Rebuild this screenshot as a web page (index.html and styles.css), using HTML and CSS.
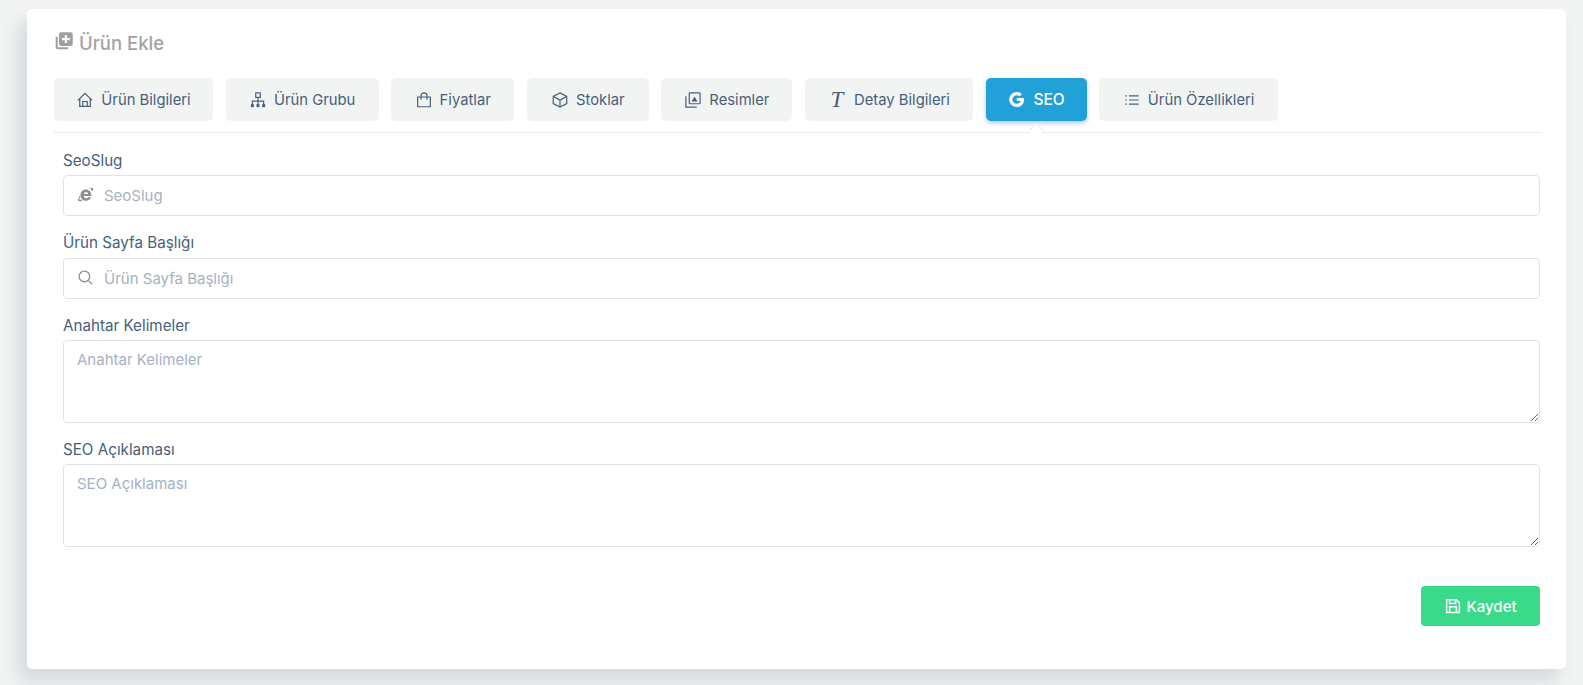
FILE: index.html
```html
<!DOCTYPE html>
<html lang="tr">
<head>
<meta charset="utf-8">
<title>Ürün Ekle</title>
<link rel="stylesheet" href="styles.css">
</head>
<body>
<main class="card">
  <h1 class="title">
    <svg class="title-icon" viewBox="0 0 24 24"><path d="M2 7h2.500v12.500H17V22H4.500A2.500 2.500 0 0 1 2 19.500z"/><path fill-rule="evenodd" d="M8.500 1.500H20A2.500 2.500 0 0 1 22.500 4v11.500A2.500 2.500 0 0 1 20 18H8.500A2.500 2.500 0 0 1 6 15.500V4a2.500 2.500 0 0 1 2.500-2.500zM13 5v3.500H9.500v2.500H13v3.500h2.500V11H19V8.500h-3.500V5z"/></svg>
    <span>Ürün Ekle</span>
  </h1>
  <nav class="tabs">
    <a class="tab tab-1"><svg class="ico" viewBox="0 0 24 24"><path d="M2.500 12.500L12 3l9.500 9.500"/><path d="M5 10v10.500h14V10"/><path d="M9 20.500V14h6v6.500"/></svg>Ürün Bilgileri</a>
    <a class="tab tab-2"><svg class="ico" viewBox="0 0 24 24"><rect x="9" y="2.500" width="6" height="6"/><path d="M12 8.500V18M4.500 18v-4.500h15V18"/><rect class="solid" x="2.500" y="17.500" width="4" height="4"/><rect class="solid" x="10" y="17.500" width="4" height="4"/><rect class="solid" x="17.500" y="17.500" width="4" height="4"/></svg>Ürün Grubu</a>
    <a class="tab tab-3"><svg class="ico" viewBox="0 0 24 24"><path d="M3.500 8h17v13h-17z"/><path d="M8 11.500V6.500a4 4 0 0 1 8 0v5"/></svg>Fiyatlar</a>
    <a class="tab tab-4"><svg class="ico" viewBox="0 0 24 24"><path d="M12 2.500l9 4.700v9.600l-9 4.700-9-4.700V7.200z"/><path d="M3 7.200l9 4.800 9-4.800M12 12v9.500"/></svg>Stoklar</a>
    <a class="tab tab-5"><svg class="ico" viewBox="0 0 24 24"><rect x="7" y="2.500" width="14.500" height="14.500" rx="1"/><path d="M2.500 7v14.500H17"/><path class="solid" d="M10 14l4-6.500 4 6.500z"/></svg>Resimler</a>
    <a class="tab tab-6"><span class="glyph-t">T</span>Detay Bilgileri</a>
    <a class="tab tab-7 active"><svg class="ico ico-g" viewBox="0 0 24 24"><path d="M21.300 10h-9v4h5.200c-.7 2.100-2.700 3.500-5.200 3.500a5.500 5.500 0 1 1 0-11c1.400 0 2.700.5 3.700 1.300l2.900-2.900A9.500 9.500 0 0 0 12.300 2.500a9.500 9.500 0 1 0 0 19c5.300 0 9.200-3.700 9.200-9.300 0-.8-.1-1.500-.2-2.200z"/></svg>SEO</a>
    <a class="tab tab-8"><svg class="ico" viewBox="0 0 24 24"><path d="M8 6.500h13M8 12h13M8 17.500h13"/><path d="M3 6.500h2M3 12h2M3 17.500h2"/></svg>Ürün Özellikleri</a>
  </nav>
  <form class="form">
    <div class="group">
      <label class="label" for="slug">SeoSlug</label>
      <div class="field">
        <svg class="field-icon ie" viewBox="0 0 24 24"><path d="M12.500 5c4.600 0 7.700 3.300 7.700 7.800v1.400H9.600c.2 2 1.500 3.200 3.300 3.200 1.300 0 2.300-.6 2.800-1.600h4.200c-.9 3-3.600 4.900-7.100 4.900-4.600 0-7.800-3.200-7.800-7.800S7.900 5 12.500 5zm-2.900 6.300h6.200c-.2-1.700-1.400-2.900-3-2.900s-2.900 1.200-3.200 2.900z"/><path d="M16.800 3.500c2.700-1.300 5-1.500 5.800-.4.700.9.300 2.600-.9 4.700-.6-1.100-1.300-2-2.100-2.700.4-.7.500-1.200.3-1.400-.4-.4-1.300-.2-2.500.3zM4.800 12.200C2.400 15.600 1 18.800 1.700 20.400c.6 1.400 2.800 1.600 6 .5-1.100-.5-2-1.100-2.700-1.900-1 .2-1.600.2-1.700-.2-.2-.7.400-2.200 1.500-4.200z"/></svg>
        <input class="input" id="slug" type="text" placeholder="SeoSlug">
      </div>
    </div>
    <div class="group">
      <label class="label" for="baslik">Ürün Sayfa Başlığı</label>
      <div class="field">
        <svg class="field-icon search" viewBox="0 0 24 24"><circle cx="10.500" cy="10.500" r="7.500"/><path d="M16 16l5.500 5.500"/></svg>
        <input class="input" id="baslik" type="text" placeholder="Ürün Sayfa Başlığı">
      </div>
    </div>
    <div class="group">
      <label class="label" for="kelime">Anahtar Kelimeler</label>
      <textarea class="area" id="kelime" placeholder="Anahtar Kelimeler"></textarea>
    </div>
    <div class="group">
      <label class="label" for="aciklama">SEO Açıklaması</label>
      <textarea class="area" id="aciklama" placeholder="SEO Açıklaması"></textarea>
    </div>
    <div class="actions">
      <button class="save" type="button"><svg class="save-icon" viewBox="0 0 24 24"><path d="M3.500 3.500h13l4 4v13h-17z"/><path d="M7.500 3.500v5h8v-5M7.500 20.500v-7.500h9v7.500"/></svg>Kaydet</button>
    </div>
  </form>
</main>
</body>
</html>
```

FILE: styles.css
```css
* { box-sizing: border-box; }
html, body { margin: 0; height: 100%; }
body {
  background: #f2f4f4;
  padding: 9px 17px 16px 27px;
  font-family: "Inter", "Noto Sans", sans-serif;
  color: #475f7b;
  overflow: hidden;
}
.card {
  height: 660px;
  background: #fff;
  border-radius: 5px;
  padding: 22px 26px 0 27px;
  box-shadow: -8px 12px 18px 0 rgba(25, 42, 70, .13);
}
.title {
  display: flex;
  align-items: center;
  gap: 5px;
  height: 24px;
  margin: 0 0 23px;
  font-size: 18.500px;
  font-weight: 500;
  color: #a3a3a3;
}
.title-icon { width: 20px; height: 20px; fill: #a0a0a0; margin-top: -4px; }
.tabs {
  display: flex;
  gap: 12.600px;
  padding-bottom: 11px;
  border-bottom: 1px solid #e9ebec;
}
.tab {
  position: relative;
  display: flex;
  align-items: center;
  justify-content: center;
  gap: 7px;
  height: 43px;
  background: #f2f4f4;
  border-radius: 5px;
  font-size: 14.800px;
  color: #475f7b;
}
.tab-1 { width: 159px; }
.tab-2 { width: 153px; }
.tab-3 { width: 123px; }
.tab-4 { width: 122px; }
.tab-5 { width: 131px; }
.tab-6 { width: 168px; }
.tab-7 { width: 101px; }
.tab-8 { width: 179px; }
.ico {
  width: 18px;
  height: 18px;
  flex: none;
  fill: none;
  stroke: #475f7b;
  stroke-width: 1.600;
}
.ico .solid { fill: #475f7b; stroke: none; }
.glyph-t {
  width: 18px;
  margin-right: 1px;
  text-align: center;
  font-family: "Liberation Serif", serif;
  font-style: italic;
  font-size: 23px;
  line-height: 1;
}
.active {
  background: #22a0d8;
  color: #fff;
  font-weight: 500;
  font-size: 15.500px;
  box-shadow: 0 2px 4px 0 rgba(90, 141, 238, .5);
}
.active::after {
  content: "";
  position: absolute;
  left: 50%;
  top: 47px;
  width: 10px;
  height: 10px;
  margin-left: -5px;
  background: #fff;
  border-top: 1px solid #e9ebec;
  border-left: 1px solid #e9ebec;
  transform: rotate(45deg);
}
.ico-g { fill: #fff; stroke: none; width: 19px; height: 19px; }
.form { padding: 15.500px 0 0 9px; }
.group { margin-bottom: 15px; }
.label {
  display: block;
  height: 21.500px;
  margin-bottom: 5px;
  font-size: 15.200px;
  line-height: 23.500px;
  color: #475f7b;
}
.field { position: relative; }
.field-icon {
  position: absolute;
  left: 14px;
  top: 11px;
  width: 17px;
  height: 17px;
}
.ie { fill: #8f8f8f; }
.search { fill: none; stroke: #8f8f8f; stroke-width: 1.800; }
.input, .area {
  display: block;
  width: 100%;
  border: 1px solid #dfe3e7;
  border-radius: 4px;
  background: #fff;
  font-family: inherit;
  font-size: 15px;
  color: #475f7b;
  outline: none;
}
.input { height: 41px; padding: 0 14px 0 40px; }
.area { height: 82.500px; padding: 9px 13px; resize: vertical; }
.input::placeholder, .area::placeholder { color: #a6b1c2; opacity: 1; }
.actions { display: flex; justify-content: flex-end; margin-top: 39.500px; }
.save {
  display: flex;
  align-items: center;
  justify-content: center;
  gap: 4px;
  width: 119px;
  height: 40px;
  border: 0;
  border-radius: 4px;
  background: #39da8a;
  color: #fff;
  font-family: inherit;
  font-size: 15px;
  font-weight: 500;
}
.save-icon { width: 18px; height: 18px; fill: none; stroke: #fff; stroke-width: 2; }
```
